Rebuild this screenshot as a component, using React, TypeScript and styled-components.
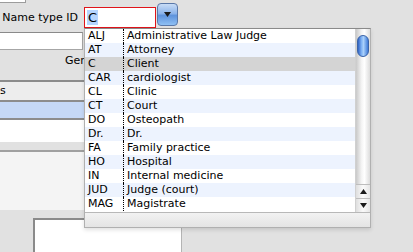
import React from "react"
import styled, { createGlobalStyle } from "styled-components"

const Global = createGlobalStyle`
  html, body { margin: 0; padding: 0; }
  body { background: #e1e1e1; font-family: "DejaVu Sans", "Liberation Sans", sans-serif; }
`

interface Entry {
  code: string
  label: string
}

const entries: Entry[] = [
  { code: "ALJ", label: "Administrative Law Judge" },
  { code: "AT", label: "Attorney" },
  { code: "C", label: "Client" },
  { code: "CAR", label: "cardiologist" },
  { code: "CL", label: "Clinic" },
  { code: "CT", label: "Court" },
  { code: "DO", label: "Osteopath" },
  { code: "Dr.", label: "Dr." },
  { code: "FA", label: "Family practice" },
  { code: "HO", label: "Hospital" },
  { code: "IN", label: "Internal medicine" },
  { code: "JUD", label: "Judge (court)" },
  { code: "MAG", label: "Magistrate" },
]

const Screen = styled.div`
  position: relative;
  width: 413px;
  height: 252px;
  overflow: hidden;
  background: #e1e1e1;
  color: #000;
`

const Stub = styled.div`
  width: 25px;
  height: 2px;
  background: #fff;
  border-right: 1px solid #9c9c9c;
  border-bottom: 1px solid #9c9c9c;
`

const FieldRow = styled.div`
  display: flex;
  align-items: flex-start;
  height: 21px;
  margin-top: 4px;
`

const Label = styled.span`
  width: 84px;
  padding-right: 6px;
  text-align: right;
  font-size: 11px;
  line-height: 21px;
  white-space: nowrap;
  box-sizing: border-box;
`

const Input = styled.div`
  width: 72px;
  height: 21px;
  box-sizing: border-box;
  border: 1px solid #e0141a;
  background: #fff;
  display: flex;
  align-items: center;
  padding-left: 2px;
  font-size: 13px;
`

const Selected = styled.span`
  background: #b5d5ff;
  padding: 0 1px;
  line-height: 15px;
`

const DropButton = styled.div`
  width: 21px;
  height: 23px;
  margin-left: 1px;
  margin-top: -4px;
  box-sizing: border-box;
  border: 1px solid #5a78a8;
  border-radius: 4px;
  background: linear-gradient(#c8dcf6 0%, #8cb4ea 45%, #5e93dc 55%, #8fc0f4 100%);
  display: flex;
  align-items: center;
  justify-content: center;
`

const TextBox = styled.div`
  width: 82px;
  height: 16px;
  margin-top: 4px;
  background: #fff;
  border: 1px solid #a6a6a6;
  border-left: none;
  border-top-color: #8a8a8a;
`

const SmallLabel = styled.div`
  width: 84px;
  margin-top: 4px;
  padding-left: 65px;
  box-sizing: border-box;
  font-size: 11px;
  line-height: 14px;
  height: 14px;
  white-space: nowrap;
  overflow: hidden;
`

const Panel = styled.div`
  margin-top: 12px;
  width: 200px;
  border-top: 2px solid #8c8c8c;
`

const Band = styled.div<{ $bg: string; $h: number; $line?: string }>`
  height: ${p => p.$h}px;
  background: ${p => p.$bg};
  border-bottom: ${p => (p.$line ? `2px solid ${p.$line}` : "none")};
  font-size: 11px;
  line-height: ${p => p.$h}px;
  overflow: hidden;
  white-space: nowrap;
`

const BottomBox = styled.div`
  margin-top: 8px;
  margin-left: 33px;
  width: 146px;
  height: 40px;
  background: #fff;
  border-top: 2px solid #8a8a8a;
  border-left: 2px solid #8a8a8a;
  border-right: 1px solid #b4b4b4;
`

const Popup = styled.div`
  position: absolute;
  left: 84px;
  top: 28px;
  width: 287px;
  height: 200px;
  box-sizing: border-box;
  background: #fff;
  border: 1px solid #b0b0b0;
  border-top-color: #8a8a8a;
  display: flex;
  flex-direction: column;
  box-shadow: 0 2px 4px rgba(0, 0, 0, 0.12);
`

const ListArea = styled.div`
  display: flex;
  height: 183px;
`

const List = styled.div`
  flex: 1;
  overflow: hidden;
`

const Row = styled.div<{ $bg: string }>`
  display: flex;
  height: 14px;
  background: ${p => p.$bg};
  font-size: 11px;
  line-height: 14px;
  white-space: nowrap;
`

const Code = styled.div`
  width: 39px;
  padding-left: 3px;
  box-sizing: border-box;
  border-right: 1px dotted #000;
`

const Desc = styled.div`
  padding-left: 3px;
`

const Scroll = styled.div`
  width: 15px;
  display: flex;
  flex-direction: column;
  background: linear-gradient(90deg, #c9c9c9, #f4f4f4 40%, #ffffff 60%, #dcdcdc);
  border-left: 1px solid #d0d0d0;
  box-sizing: border-box;
`

const Track = styled.div`
  flex: 1;
  padding-top: 6px;
  display: flex;
  justify-content: center;
`

const Thumb = styled.div`
  width: 12px;
  height: 22px;
  border-radius: 6px;
  border: 1px solid #3a63a8;
  box-sizing: border-box;
  background: linear-gradient(90deg, #2f62c4, #7fb2f4 35%, #a9d0fb 55%, #3e7ad8);
`

const Arrow = styled.div`
  height: 13px;
  border-top: 1px solid #bdbdbd;
  display: flex;
  align-items: center;
  justify-content: center;
  background: linear-gradient(90deg, #dedede, #fafafa 50%, #e6e6e6);
`

const Footer = styled.div`
  flex: 1;
  border-top: 1px solid #b8b8b8;
  background: linear-gradient(#f2f2f2, #e4e4e4);
`

const Triangle = ({ up }: { up?: boolean }) => (
  <svg width="7" height="5" viewBox="0 0 7 5">
    <path d={up ? "M3.5 0 L7 5 L0 5 Z" : "M0 0 L7 0 L3.5 5 Z"} fill="#1a1a1a" />
  </svg>
)

const rowColor = (i: number) => {
  if (i === 2) return "#d4d4d4"
  return i % 2 === 1 ? "#edf3fe" : "#ffffff"
}

const App = () => {
  return (
    <Screen>
      <Global />
      <Stub />
      <FieldRow>
        <Label>Name type ID</Label>
        <Input>
          <Selected>C</Selected>
        </Input>
        <DropButton>
          <Triangle />
        </DropButton>
      </FieldRow>
      <TextBox />
      <SmallLabel>Gender</SmallLabel>
      <Panel>
        <Band $bg="#ededed" $h={18} $line="#8c8c8c">
          s
        </Band>
        <Band $bg="#c5d8f6" $h={16} $line="#8c8c8c" />
        <Band $bg="#ffffff" $h={22} />
        <Band $bg="#e1e1e1" $h={8} $line="#a0a0a0" />
        <Band $bg="#f4f4f4" $h={58} />
      </Panel>
      <BottomBox />

      <Popup>
        <ListArea>
          <List>
            {entries.map((e, i) => (
              <Row key={e.code} $bg={rowColor(i)}>
                <Code>{e.code}</Code>
                <Desc>{e.label}</Desc>
              </Row>
            ))}
          </List>
          <Scroll>
            <Track>
              <Thumb />
            </Track>
            <Arrow>
              <Triangle up />
            </Arrow>
            <Arrow>
              <Triangle />
            </Arrow>
          </Scroll>
        </ListArea>
        <Footer />
      </Popup>
    </Screen>
  )
}

export default App
